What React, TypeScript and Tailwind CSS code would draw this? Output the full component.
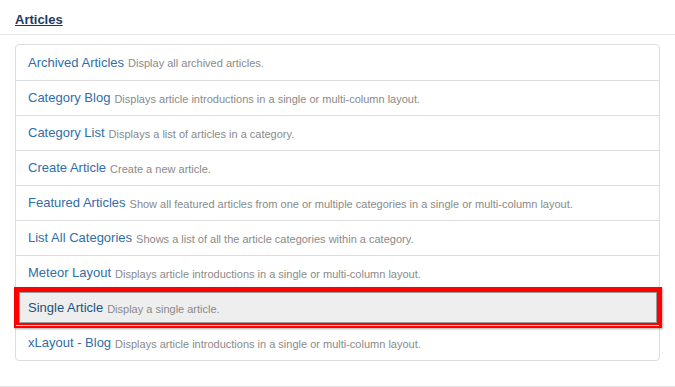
const items = [
  { title: "Archived Articles", desc: "Display all archived articles." },
  { title: "Category Blog", desc: "Displays article introductions in a single or multi-column layout." },
  { title: "Category List", desc: "Displays a list of articles in a category." },
  { title: "Create Article", desc: "Create a new article." },
  { title: "Featured Articles", desc: "Show all featured articles from one or multiple categories in a single or multi-column layout." },
  { title: "List All Categories", desc: "Shows a list of all the article categories within a category." },
  { title: "Meteor Layout", desc: "Displays article introductions in a single or multi-column layout." },
  { title: "Single Article", desc: "Display a single article.", active: true },
  { title: "xLayout - Blog", desc: "Displays article introductions in a single or multi-column layout." },
];

export default function App() {
  return (
    <div className="w-[675px] h-[387px] bg-white font-['Liberation_Sans',Arial,sans-serif] overflow-hidden">
      <div className="h-[35px] border-b border-[#e5e5e5] px-[15px] pt-[7px]">
        <a className="text-[13px] font-bold text-[#1f3b63] underline leading-[18px]">Articles</a>
      </div>
      <div className="border-b border-[#e5e5e5] h-[352px] pt-[9px] pl-[15px] pr-[15px]">
        <ul className="border border-[#dddddd] rounded-[4px]">
          {items.map((it, i) => (
            <li
              key={it.title}
              className={
                "relative h-[35px] flex items-center pl-[12px] whitespace-nowrap " +
                (i > 0 ? "border-t border-[#dddddd] " : "") +
                (it.active ? "bg-[#eeeeee]" : "")
              }
            >
              <span className={"text-[13px] " + (it.active ? "text-[#23527c]" : "text-[#2f6ea8]")}>{it.title}</span>
              <span className="text-[11px] text-[#8a8a8a] ml-[4px] mt-[2px]">{it.desc}</span>
              {it.active && (
                <div className="absolute left-[-2px] right-[-3px] top-[-4px] bottom-[-3px] border-[5px] border-[#ff0000] shadow-[inset_0_0_0_1px_#9a9a9a,1px_1px_2px_rgba(0,0,0,0.35)]" />
              )}
            </li>
          ))}
        </ul>
      </div>
    </div>
  );
}
